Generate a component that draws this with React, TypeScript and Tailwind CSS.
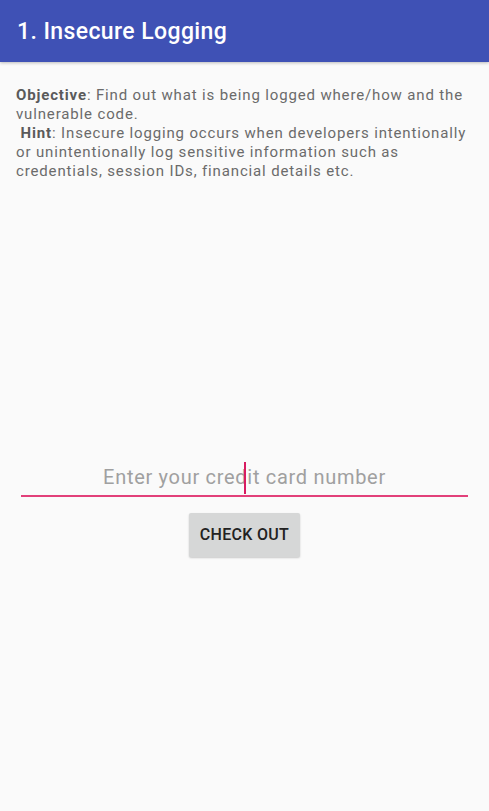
export default function App() {
  return (
    <div className="w-[489px] h-[811px] bg-[#fafafa] flex flex-col font-['Roboto',sans-serif]">
      {/* Toolbar */}
      <div className="h-[62px] bg-[#3f51b5] flex items-center px-[17px] pt-[2px] shadow-[0_1px_3px_rgba(0,0,0,0.25)]">
        <h1 className="text-white text-[23px] font-medium tracking-[0.4px]">1. Insecure Logging</h1>
      </div>

      {/* Description */}
      <div className="px-[16px] pt-[24px] text-[15px] leading-[19px] tracking-[0.85px] text-[#6b6b6b]">
        <span className="font-bold text-[#5a5a5a]">Objective</span>: Find out what is being logged where/how and the vulnerable code.
        <br />
        &nbsp;<span className="font-bold text-[#5a5a5a]">Hint</span>: Insecure logging occurs when developers intentionally or unintentionally log sensitive information such as credentials, session IDs, financial details etc.
      </div>

      {/* Input */}
      <div className="mt-[280px] mx-[21px] flex flex-col items-center">
        <div className="relative w-full h-[36px] flex items-center justify-center border-b-2 border-[#e2407a]">
          <span className="text-[20px] tracking-[0.7px] text-[#a0a0a0]">
            Enter your cred<span className="inline-block w-[2px] h-[32px] bg-[#d81b60] align-middle -ml-[3px] mr-[1px]"></span>it card number
          </span>
        </div>
        <button className="mt-[16px] w-[111px] h-[44px] bg-[#d6d7d7] rounded-[2px] shadow-[0_1px_2px_rgba(0,0,0,0.2)] text-[16px] tracking-[0.3px] font-medium text-[#222]">
          CHECK OUT
        </button>
      </div>
    </div>
  );
}
